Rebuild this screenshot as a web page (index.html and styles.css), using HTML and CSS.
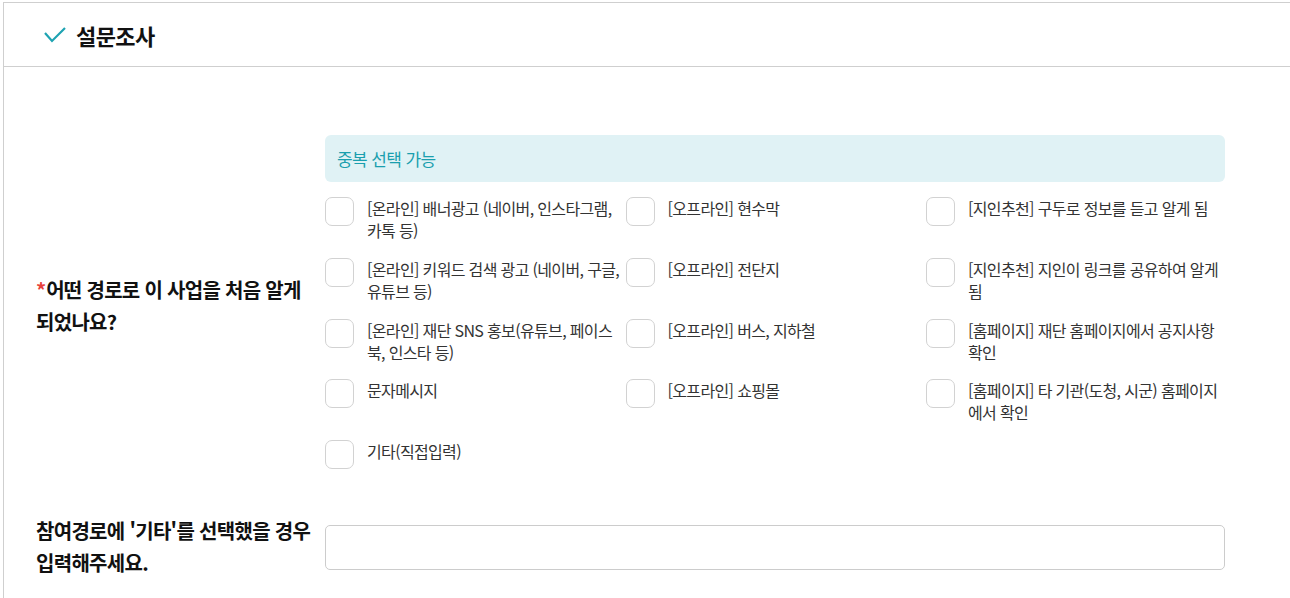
FILE: index.html
```html
<!DOCTYPE html>
<html lang="ko">
<head>
  <meta charset="UTF-8" />
  <title>설문조사</title>
  <link rel="stylesheet" href="styles.css">
</head>
<body>
  <section class="survey">
    <div class="survey-head">
      <svg class="head-check" viewBox="0 0 22 16" width="22" height="16">
        <polyline points="1,6 8,14 21,1" fill="none" stroke="#1ea3b2" stroke-width="2.2"/>
      </svg>
      <h2>설문조사</h2>
    </div>

    <div class="survey-body">
      <div class="q-row">
        <div class="q-label"><span class="req">*</span>어떤 경로로 이 사업을 처음 알게 되었나요?</div>
        <div class="q-field">
          <div class="notice">중복 선택 가능</div>
          <div class="options">
            <label class="opt"><span class="box"></span><span class="opt-text">[온라인] 배너광고 (네이버, 인스타그램, 카톡 등)</span></label>
            <label class="opt"><span class="box"></span><span class="opt-text">[오프라인] 현수막</span></label>
            <label class="opt"><span class="box"></span><span class="opt-text">[지인추천] 구두로 정보를 듣고 알게 됨</span></label>
            <label class="opt"><span class="box"></span><span class="opt-text">[온라인] 키워드 검색 광고 (네이버, 구글, 유튜브 등)</span></label>
            <label class="opt"><span class="box"></span><span class="opt-text">[오프라인] 전단지</span></label>
            <label class="opt"><span class="box"></span><span class="opt-text">[지인추천] 지인이 링크를 공유하여 알게 됨</span></label>
            <label class="opt"><span class="box"></span><span class="opt-text">[온라인] 재단 SNS 홍보(유튜브, 페이스북, 인스타 등)</span></label>
            <label class="opt"><span class="box"></span><span class="opt-text">[오프라인] 버스, 지하철</span></label>
            <label class="opt"><span class="box"></span><span class="opt-text">[홈페이지] 재단 홈페이지에서 공지사항 확인</span></label>
            <label class="opt"><span class="box"></span><span class="opt-text">문자메시지</span></label>
            <label class="opt"><span class="box"></span><span class="opt-text">[오프라인] 쇼핑몰</span></label>
            <label class="opt"><span class="box"></span><span class="opt-text">[홈페이지] 타 기관(도청, 시군) 홈페이지에서 확인</span></label>
            <label class="opt"><span class="box"></span><span class="opt-text">기타(직접입력)</span></label>
          </div>
        </div>
      </div>

      <div class="q-row q-row-etc">
        <div class="q-label">참여경로에 '기타'를 선택했을 경우 입력해주세요.</div>
        <div class="q-field">
          <input class="etc-input" type="text">
        </div>
      </div>
    </div>
  </section>
</body>
</html>
```

FILE: styles.css
```css
body {
  margin: 0;
  font-family: "Noto Sans CJK KR", "Noto Sans", sans-serif;
  background: #fff;
  color: #333;
}

.survey {
  box-sizing: border-box;
  min-height: calc(100vh - 2px);
  margin: 2px 0 0 3px;
  border-top: 1px solid #cfcfcf;
  border-left: 1px solid #cfcfcf;
}

.survey-head {
  display: flex;
  align-items: center;
  gap: 10px;
  height: 63px;
  padding-left: 40px;
  border-bottom: 1px solid #cfcfcf;
}

.head-check {
  display: block;
}

.survey-head h2 {
  margin: 0;
  font-size: 22px;
  font-weight: 700;
  letter-spacing: -0.6px;
  color: #111;
}

.survey-body {
  padding: 68px 0 0 32px;
}

.q-row {
  display: grid;
  grid-template-columns: 289px 900px;
  align-items: center;
}

.q-row-etc {
  margin-top: 30px;
}

.q-label {
  padding: 0 8px 8px 0;
  font-size: 20px;
  font-weight: 700;
  line-height: 32px;
  letter-spacing: -0.7px;
  word-break: keep-all;
  color: #111;
}

.q-row-etc .q-label {
  padding-bottom: 0;
}

.req {
  letter-spacing: 0;
  color: #e8413b;
}

.notice {
  display: flex;
  align-items: center;
  height: 47px;
  padding: 0 12px;
  margin-bottom: 15px;
  border-radius: 6px;
  background: #e0f2f5;
  color: #1a9fae;
  font-size: 17px;
  letter-spacing: -0.6px;
}

.options {
  display: grid;
  grid-template-columns: repeat(3, 300.5px);
  row-gap: 15.75px;
}

.opt {
  display: flex;
  gap: 13px;
  min-height: 45px;
}

.box {
  flex: none;
  width: 29px;
  height: 29px;
  box-sizing: border-box;
  border: 1px solid #d2d2d2;
  border-radius: 7px;
  background: #fff;
}

.opt-text {
  font-size: 16px;
  line-height: 22px;
  letter-spacing: -0.65px;
  color: #333;
}

.etc-input {
  display: block;
  width: 100%;
  height: 45px;
  box-sizing: border-box;
  border: 1px solid #cccccc;
  border-radius: 5px;
  font: inherit;
}
```
